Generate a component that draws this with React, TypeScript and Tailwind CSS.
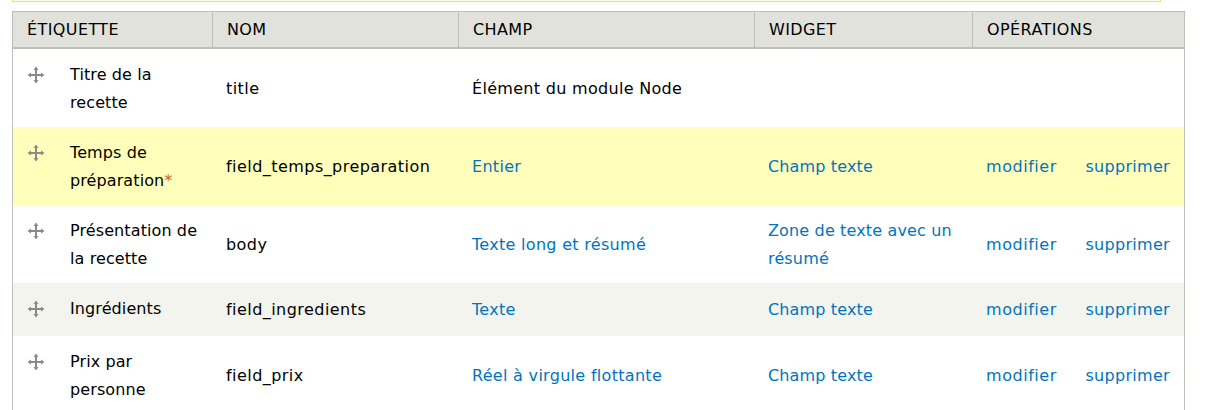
const linkClass = "text-[#0074bd]";

type Row = {
  label: React.ReactNode;
  name: string;
  field: string;
  widget?: string;
  bg: string;
  height: string;
  nudge: string;
};

const rows: Row[] = [
  { label: "Titre de la recette", name: "title", field: "Élément du module Node", bg: "bg-white", height: "h-[78px]", nudge: "pt-[2px]" },
  {
    label: (
      <>
        Temps de préparation<span className="text-[#c8641e]">*</span>
      </>
    ),
    name: "field_temps_preparation",
    field: "Entier",
    widget: "Champ texte",
    bg: "bg-[#ffffbb]",
    height: "h-[78px]",
    nudge: "pt-[2px]",
  },
  {
    label: "Présentation de la recette",
    name: "body",
    field: "Texte long et résumé",
    widget: "Zone de texte avec un résumé",
    bg: "bg-white",
    height: "h-[78px]",
    nudge: "pt-[2px]",
  },
  { label: "Ingrédients", name: "field_ingredients", field: "Texte", widget: "Champ texte", bg: "bg-[#f3f4ee]", height: "h-[53px]", nudge: "" },
  { label: "Prix par personne", name: "field_prix", field: "Réel à virgule flottante", widget: "Champ texte", bg: "bg-white", height: "h-[78px]", nudge: "pt-[2px]" },
];

function DragHandle() {
  return (
    <svg width="18" height="18" viewBox="0 0 18 18" className="shrink-0 text-[#8a8a8a]" fill="currentColor">
      <path d="M9 0.5 L11.5 4 H6.5 Z M9 17.5 L6.5 14 H11.5 Z M0.5 9 L4 6.5 V11.5 Z M17.5 9 L14 11.5 V6.5 Z" />
      <rect x="8" y="3" width="2" height="12" />
      <rect x="3" y="8" width="12" height="2" />
    </svg>
  );
}

function Th({ children, last }: { children: React.ReactNode; last?: boolean }) {
  return (
    <th
      className={`h-[36px] pl-[14px] pr-[10px] text-left align-middle text-[16px] font-normal uppercase tracking-[0.4px] text-black ${last ? "" : "border-r border-[#bfbfba]"}`}
    >
      {children}
    </th>
  );
}

export default function App() {
  return (
    <div className="h-[410px] w-[1206px] overflow-hidden bg-white font-['DejaVu_Sans',sans-serif] text-[16px] leading-[28px] tracking-[0.3px] text-black">
      <div className="ml-[12px] h-[2px] w-[1149px] border-x border-b border-[#ecdf75] bg-[#fffce5]" />
      <div className="ml-[12px] mt-[9px] w-[1173px] border-x border-t border-[#bfbfba]">
        <table className="w-full table-fixed border-collapse">
          <colgroup>
            <col className="w-[199px]" />
            <col className="w-[246px]" />
            <col className="w-[296px]" />
            <col className="w-[218px]" />
            <col />
          </colgroup>
          <thead>
            <tr className="border-b-2 border-[#bfbfba] bg-[#e1e2dc]">
              <Th>Étiquette</Th>
              <Th>
                <span className="ml-[0.5px]">Nom</span>
              </Th>
              <Th>
                <span className="ml-[0.5px]">Champ</span>
              </Th>
              <Th>
                <span className="ml-[0.5px]">Widget</span>
              </Th>
              <Th last>
                <span className="ml-[0.5px]">Opérations</span>
              </Th>
            </tr>
          </thead>
          <tbody>
            {rows.map((row) => (
              <tr key={row.name} className={`${row.bg} ${row.height}`}>
                <td className="pt-[12px] pb-[10px] pl-[14px] pr-[6px] align-top">
                  <div className="flex gap-[25px]">
                    <div className="pt-[5px]">
                      <DragHandle />
                    </div>
                    <div className="tracking-[0.1px]">{row.label}</div>
                  </div>
                </td>
                <td className={`px-[14px] align-middle tracking-[0.45px] ${row.nudge}`}>{row.name}</td>
                <td className={`px-[14px] align-middle ${row.nudge} ${row.widget ? linkClass : ""}`}>{row.field}</td>
                <td className={`px-[14px] align-middle tracking-[0.15px] ${row.nudge} ${linkClass}`}>{row.widget}</td>
                <td className={`px-[14px] align-middle ${row.nudge} ${linkClass}`}>
                  {row.widget && (
                    <div className="flex justify-between">
                      <span className="tracking-[0.55px]">modifier</span>
                      <span>supprimer</span>
                    </div>
                  )}
                </td>
              </tr>
            ))}
          </tbody>
        </table>
      </div>
    </div>
  );
}
